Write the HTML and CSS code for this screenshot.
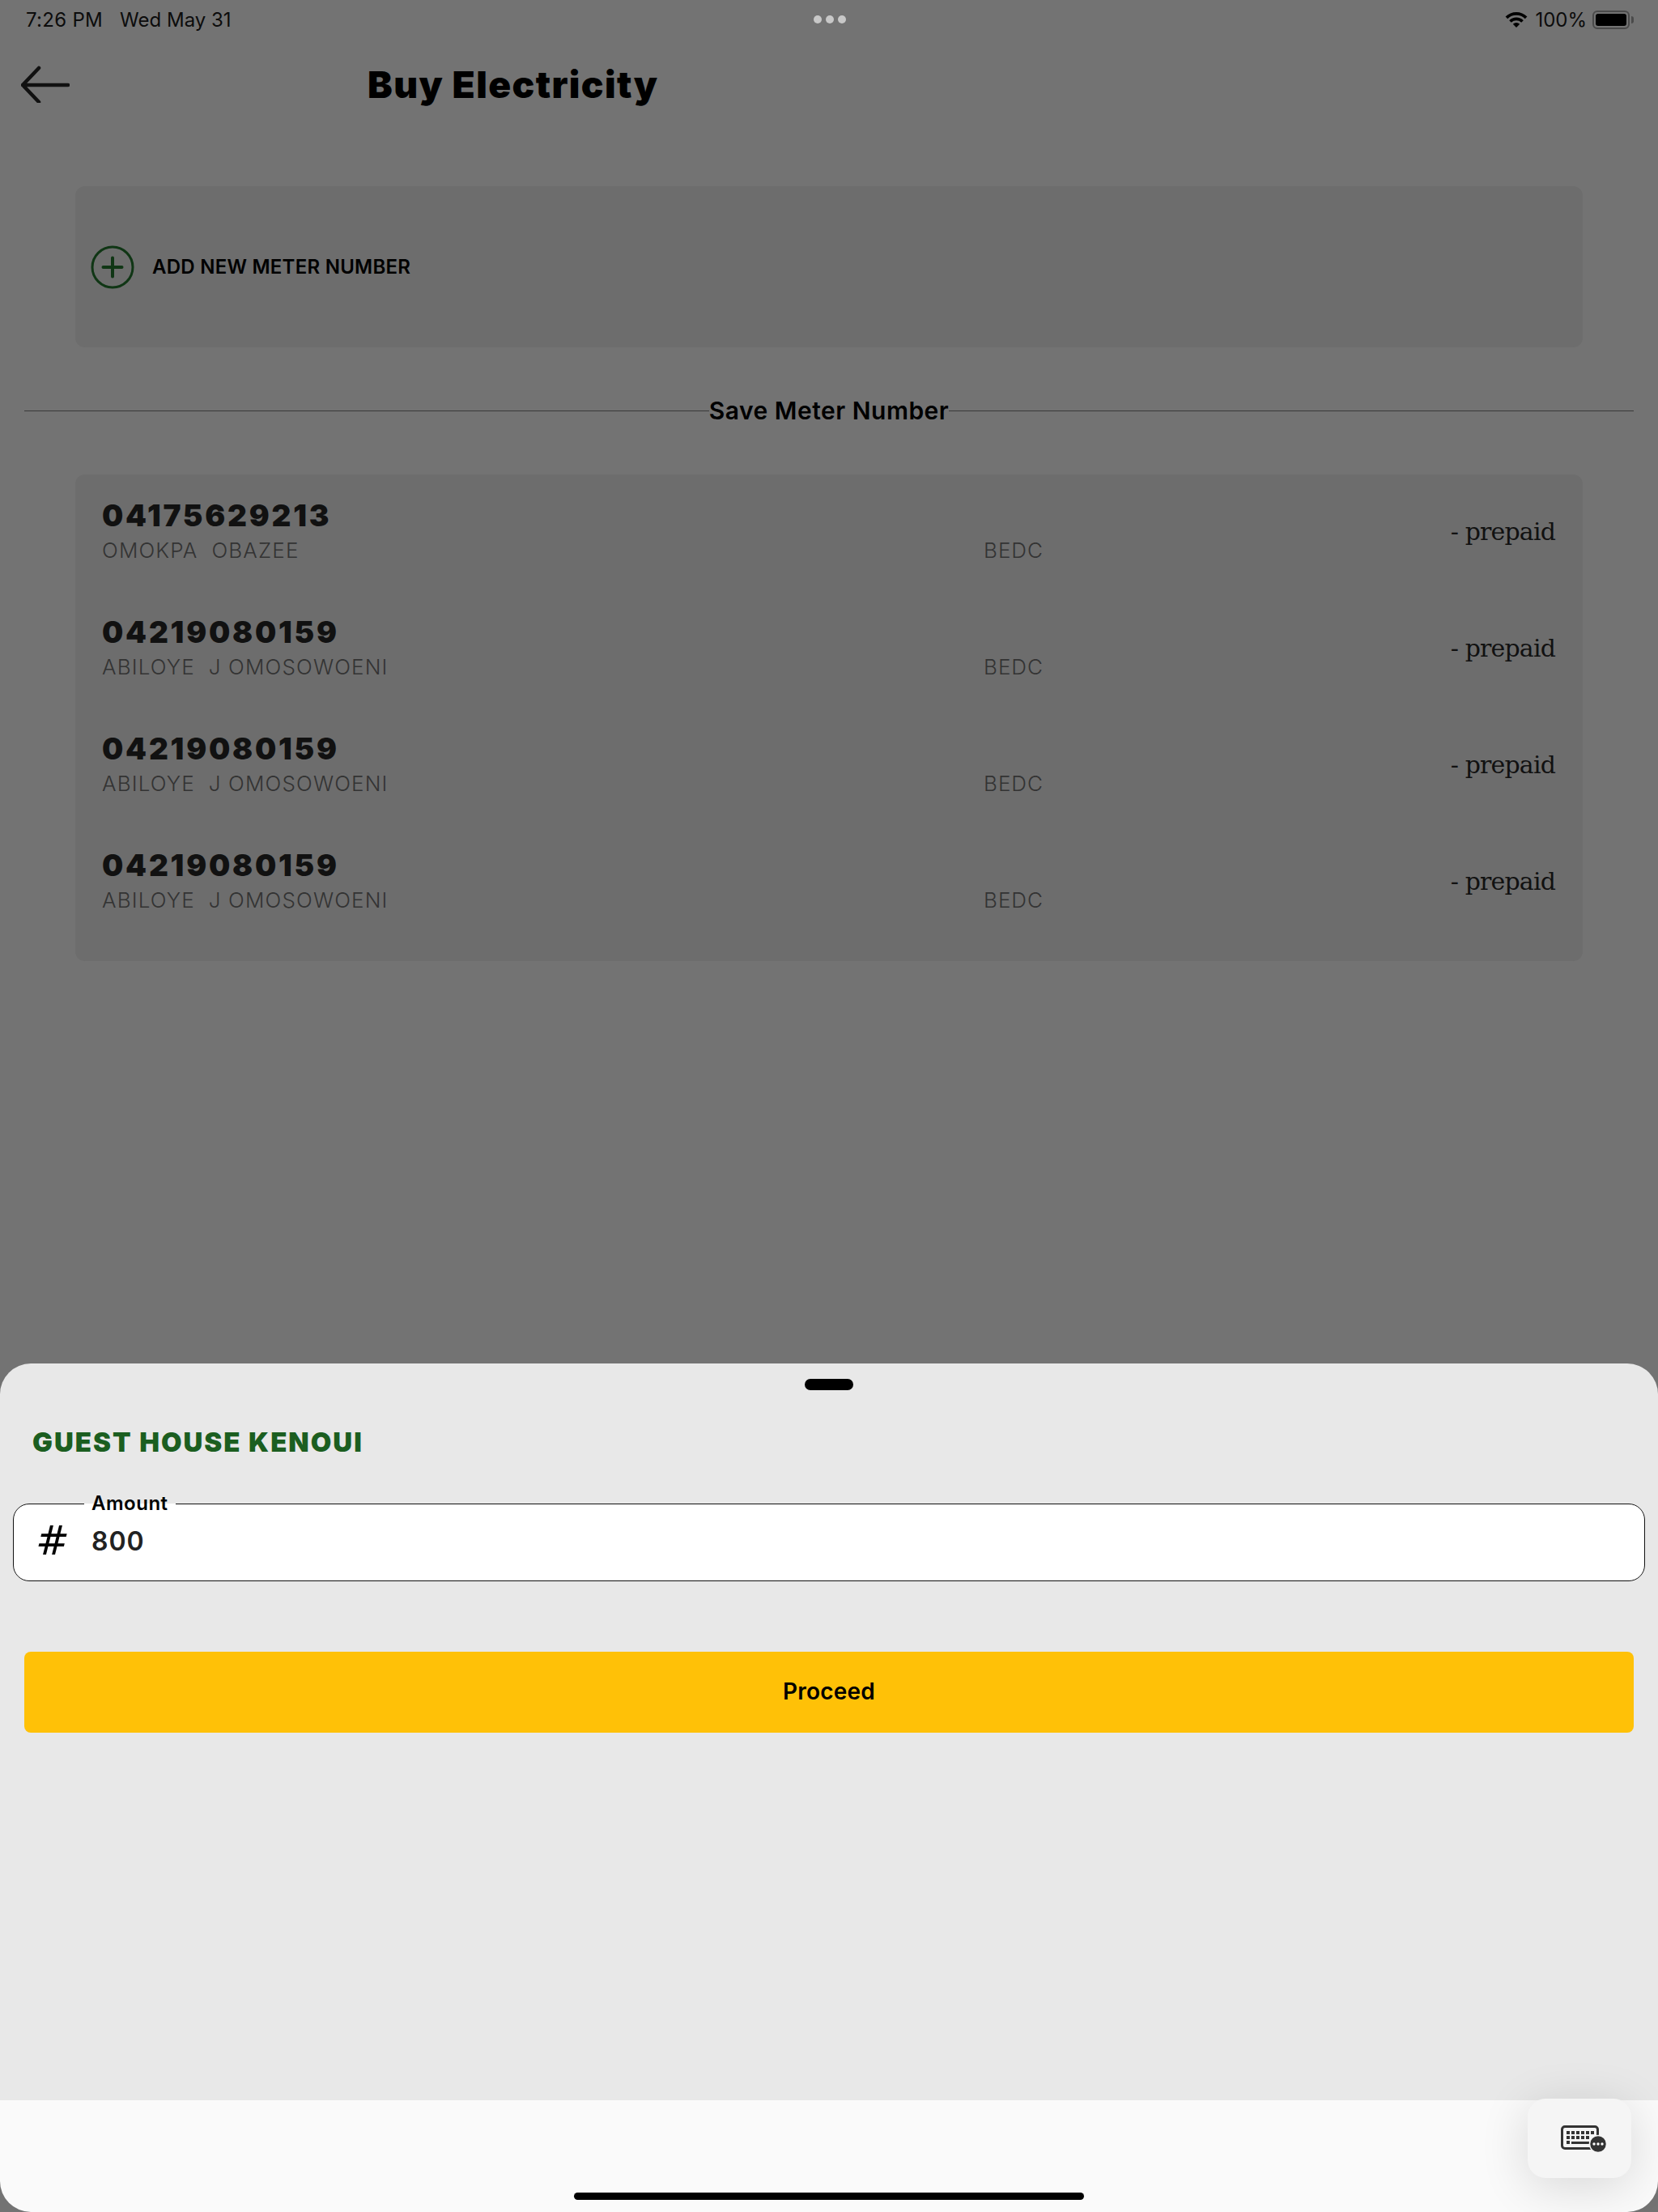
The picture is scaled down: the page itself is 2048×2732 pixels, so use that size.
FILE: index.html
```html
<!DOCTYPE html>
<html lang="en">
<head>
    <meta charset="UTF-8">
    <meta name="viewport" content="width=device-width, initial-scale=1.0">
    <title>Buy Electricity</title>
    <link rel="stylesheet" href="styles.css">
</head>
<body>
    <div class="page">
        <div class="status-bar">
            <div class="status-time">
                <span>7:26 PM</span>
                <span>Wed May 31</span>
            </div>
            <div class="status-dots">
                <span></span><span></span><span></span>
            </div>
            <div class="status-right">
                <svg class="wifi-icon" width="28" height="20" viewBox="0 0 28 20">
                    <path d="M0.6 6.6 A19 19 0 0 1 27.4 6.6 L24.8 9.3 A15.3 15.3 0 0 0 3.2 9.3 Z" fill="#000"/>
                    <path d="M5.2 11.2 A12.6 12.6 0 0 1 22.8 11.2 L20.2 13.8 A9 9 0 0 0 7.8 13.8 Z" fill="#000"/>
                    <path d="M9.8 15.7 A6.2 6.2 0 0 1 18.2 15.7 L14 20 Z" fill="#000"/>
                </svg>
                <span class="battery-text">100%</span>
                <div class="battery">
                    <div class="battery-fill"></div>
                </div>
                <div class="battery-cap"></div>
            </div>
        </div>

        <header class="top-bar">
            <svg class="back-icon" width="60" height="46" viewBox="0 0 60 46">
                <path d="M22 3 L2 24 L22 45 M2 24 H58" fill="none" stroke="#111" stroke-width="4.5" stroke-linecap="round" stroke-linejoin="round"/>
            </svg>
            <h1>Buy Electricity</h1>
        </header>

        <div class="card add-card">
            <svg class="plus-icon" width="54" height="54" viewBox="0 0 54 54">
                <circle cx="27" cy="27" r="25" fill="none" stroke="#103615" stroke-width="3"/>
                <path d="M27 15.5 V38.5 M15.5 27 H38.5" fill="none" stroke="#103615" stroke-width="4" stroke-linecap="round"/>
            </svg>
            <span>ADD NEW METER NUMBER</span>
        </div>

        <div class="divider">
            <span>Save Meter Number</span>
        </div>

        <div class="card meter-list">
            <div class="meter-row">
                <div>
                    <div class="meter-number">04175629213</div>
                    <div class="meter-name">OMOKPA  OBAZEE</div>
                </div>
                <div class="meter-company">BEDC</div>
                <div class="meter-type">- prepaid</div>
            </div>
            <div class="meter-row">
                <div>
                    <div class="meter-number">04219080159</div>
                    <div class="meter-name">ABILOYE  J OMOSOWOENI</div>
                </div>
                <div class="meter-company">BEDC</div>
                <div class="meter-type">- prepaid</div>
            </div>
            <div class="meter-row">
                <div>
                    <div class="meter-number">04219080159</div>
                    <div class="meter-name">ABILOYE  J OMOSOWOENI</div>
                </div>
                <div class="meter-company">BEDC</div>
                <div class="meter-type">- prepaid</div>
            </div>
            <div class="meter-row">
                <div>
                    <div class="meter-number">04219080159</div>
                    <div class="meter-name">ABILOYE  J OMOSOWOENI</div>
                </div>
                <div class="meter-company">BEDC</div>
                <div class="meter-type">- prepaid</div>
            </div>
        </div>

        <div class="sheet">
            <div class="sheet-body">
                <div class="sheet-handle"></div>
                <h2>GUEST HOUSE KENOUI</h2>
                <fieldset class="amount-field">
                    <legend>Amount</legend>
                    <div class="amount-row">
                        <span class="amount-sign">#</span>
                        <span class="amount-value">800</span>
                    </div>
                </fieldset>
                <button class="btn-proceed">Proceed</button>
            </div>
            <div class="keyboard-bar">
                <div class="keyboard-btn">
                    <svg width="56" height="33" viewBox="0 0 56 33">
                        <rect x="1.5" y="1.5" width="44" height="27" rx="3.5" fill="none" stroke="#333" stroke-width="3"/>
                        <g fill="#333">
                            <rect x="7" y="7" width="4" height="4"/>
                            <rect x="13" y="7" width="4" height="4"/>
                            <rect x="19" y="7" width="4" height="4"/>
                            <rect x="25" y="7" width="4" height="4"/>
                            <rect x="31" y="7" width="4" height="4"/>
                            <rect x="37" y="7" width="4" height="4"/>
                            <rect x="7" y="13" width="4" height="4"/>
                            <rect x="13" y="13" width="4" height="4"/>
                            <rect x="19" y="13" width="4" height="4"/>
                            <rect x="25" y="13" width="4" height="4"/>
                            <rect x="31" y="13" width="4" height="4"/>
                            <rect x="7" y="19" width="4" height="4"/>
                            <rect x="13" y="20" width="22" height="3"/>
                        </g>
                        <circle cx="46" cy="23" r="10.5" fill="#333" stroke="#f5f5f5" stroke-width="1.5"/>
                        <circle cx="41" cy="23" r="1.7" fill="#fff"/>
                        <circle cx="46" cy="23" r="1.7" fill="#fff"/>
                        <circle cx="51" cy="23" r="1.7" fill="#fff"/>
                    </svg>
                </div>
                <div class="home-indicator"></div>
            </div>
        </div>
    </div>
</body>
</html>
```

FILE: styles.css
```css
body {
    font-family: Inter, 'Liberation Sans', sans-serif;
    margin: 0;
    padding: 0;
    background-color: #737373;
    color: #000;
}

.page {
    height: 2732px;
    display: flex;
    flex-direction: column;
    overflow: hidden;
}

.status-bar {
    height: 48px;
    padding: 0 30px 0 32px;
    display: grid;
    grid-template-columns: 1fr auto 1fr;
    align-items: center;
    font-size: 24px;
    color: #0c0c0c;
}

.status-time {
    display: flex;
    gap: 21px;
}

.status-time span:first-child {
    letter-spacing: 0.3px;
}

.status-dots {
    display: flex;
    gap: 5px;
}

.status-dots span {
    width: 10px;
    height: 10px;
    border-radius: 50%;
    background-color: #c8c8c8;
}

.status-right {
    display: flex;
    align-items: center;
    justify-content: flex-end;
}

.battery-text {
    margin-left: 9px;
    margin-right: 7px;
}

.battery {
    width: 46px;
    height: 23px;
    box-sizing: border-box;
    border: 2px solid #4a4a4a;
    border-radius: 6px;
    padding: 2px;
}

.battery-fill {
    height: 100%;
    background-color: #000;
    border-radius: 3px;
}

.battery-cap {
    width: 3px;
    height: 9px;
    margin-left: 2px;
    background-color: #4a4a4a;
    border-radius: 0 3px 3px 0;
}

.top-bar {
    height: 112px;
    padding-left: 26px;
    display: flex;
    align-items: center;
    gap: 368px;
}

h1 {
    margin: 0;
    font-size: 46px;
    font-weight: 900;
    letter-spacing: 1.4px;
}

.card {
    margin: 0 93px;
    background-color: #6d6d6d;
    border-radius: 12px;
}

.add-card {
    margin-top: 70px;
    height: 199px;
    padding-left: 19px;
    display: flex;
    align-items: center;
    gap: 22px;
    font-size: 24px;
    font-weight: 600;
    letter-spacing: 0.25px;
}

.divider {
    margin: 58px 30px 0;
    height: 40px;
    display: flex;
    align-items: center;
    font-size: 30px;
    font-weight: 600;
    letter-spacing: 0.5px;
}

.divider:before,
.divider:after {
    content: "";
    flex: 1;
    height: 1px;
    background-color: #3a3a3a;
}

.meter-list {
    margin-top: 59px;
    padding: 29px 34px 40px 33px;
    display: flex;
    flex-direction: column;
    gap: 44px;
}

.meter-row {
    height: 100px;
    display: grid;
    grid-template-columns: 1089px 1fr auto;
    align-items: start;
}

.meter-number {
    font-size: 37px;
    line-height: 44px;
    font-weight: 900;
    letter-spacing: 2.8px;
    color: #111;
}

.meter-name {
    margin-top: 3px;
    font-size: 26px;
    line-height: 36px;
    font-weight: 300;
    letter-spacing: 1.15px;
    color: #333;
    white-space: pre;
}

.meter-company {
    margin-top: 47px;
    font-size: 26px;
    line-height: 36px;
    font-weight: 300;
    letter-spacing: 1px;
    color: #333;
}

.meter-type {
    margin-top: 20px;
    font-family: 'DejaVu Serif', serif;
    font-size: 30px;
    line-height: 44px;
    letter-spacing: -0.85px;
    color: #111;
}

.sheet {
    margin-top: auto;
    height: 1048px;
    display: flex;
    flex-direction: column;
}

.sheet-body {
    flex: 1;
    background-color: #e8e8e8;
    border-radius: 38px 38px 0 0;
    display: flex;
    flex-direction: column;
}

.sheet-handle {
    align-self: center;
    margin-top: 19px;
    width: 60px;
    height: 14px;
    border-radius: 7px;
    background-color: #000;
}

h2 {
    margin: 44px 0 0 40px;
    font-size: 33px;
    line-height: 40px;
    font-weight: 900;
    letter-spacing: 2px;
    color: #1b5e20;
}

.amount-field {
    margin: 40px 16px 0;
    padding: 0;
    min-width: 0;
    border: 1px solid #111;
    border-radius: 20px;
    background-color: #fff;
}

.amount-field legend {
    margin-left: 87px;
    padding: 0 9px;
    font-size: 24px;
    line-height: 32px;
    font-weight: 600;
    letter-spacing: 0.5px;
}

.amount-row {
    height: 79px;
    padding: 0 0 19px 27px;
    box-sizing: border-box;
    display: flex;
    align-items: center;
}

.amount-sign {
    width: 69px;
    font-family: 'DejaVu Sans', sans-serif;
    font-size: 50px;
    font-style: italic;
    line-height: 1;
}

.amount-value {
    font-size: 32px;
    font-weight: 600;
    letter-spacing: 1px;
    color: #222;
}

.btn-proceed {
    margin: 87px 30px 0;
    height: 100px;
    border: none;
    border-radius: 8px;
    background-color: #ffc107;
    font-family: inherit;
    font-size: 28px;
    font-weight: 600;
    letter-spacing: 0.2px;
    color: #000;
    padding-bottom: 4px;
}

.keyboard-bar {
    position: relative;
    height: 138px;
    background-color: #fafafa;
    border-radius: 0 0 38px 38px;
    display: flex;
    flex-direction: column;
    align-items: center;
    justify-content: flex-end;
}

.home-indicator {
    width: 630px;
    height: 9px;
    margin-bottom: 15px;
    border-radius: 5px;
    background-color: #000;
}

.keyboard-btn {
    position: absolute;
    top: -2px;
    right: 33px;
    width: 128px;
    height: 98px;
    box-sizing: border-box;
    padding-left: 10px;
    display: flex;
    align-items: center;
    justify-content: center;
    background-color: #f5f5f5;
    border-radius: 22px;
    box-shadow: 0 10px 60px rgba(0, 0, 0, 0.14);
}
```
